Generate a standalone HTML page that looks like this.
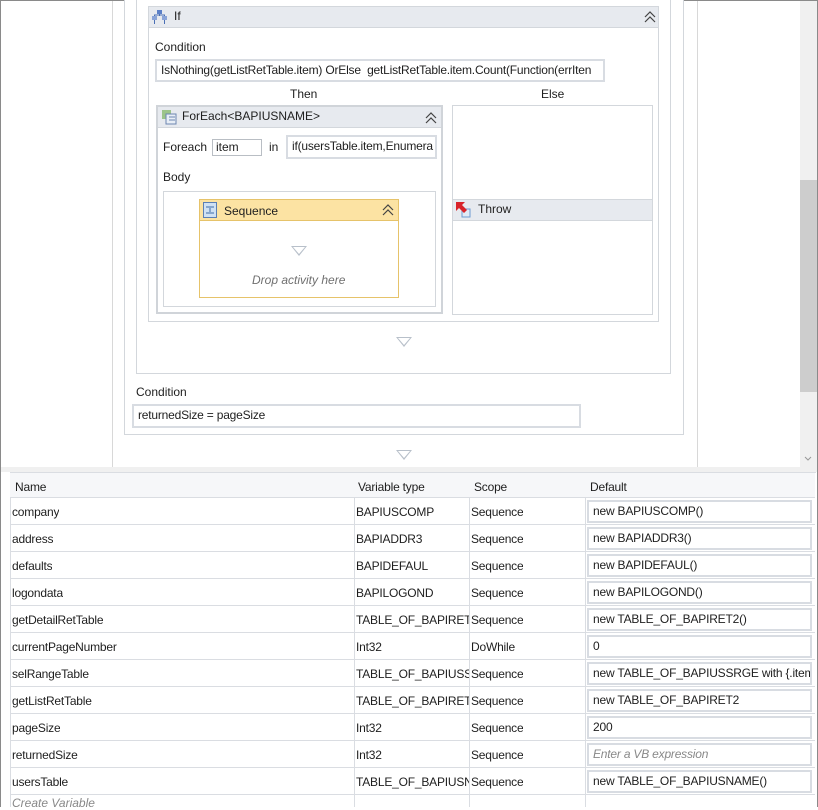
<!DOCTYPE html>
<html><head><meta charset="utf-8">
<style>
*{box-sizing:border-box;margin:0;padding:0}
body{width:818px;height:807px;position:relative;overflow:hidden;background:#fff;font-family:"Liberation Sans",sans-serif;font-size:12px;color:#1e1e1e}
.a{position:absolute}
.box{position:absolute;border:1px solid #d3d7dc;background:#fff}
.hdr{position:absolute;background:#e7eaef;border-bottom:1px solid #d3d7dc}
.inp{position:absolute;border:2px solid #d8dce2;background:#fff;padding-left:4px;line-height:18px;white-space:nowrap;overflow:hidden;letter-spacing:-0.2px}
.tri{position:absolute;width:0;height:0;border-left:8px solid transparent;border-right:8px solid transparent;border-top:10px solid #b8c0ca}
.tri:after{content:"";position:absolute;left:-6px;top:-9px;border-left:6px solid transparent;border-right:6px solid transparent;border-top:7.5px solid #fff}
.chev{position:absolute}
.row{position:absolute;left:10px;width:805px;height:27px;border-bottom:1px solid #dadde2}
.row span{position:absolute;top:7px;white-space:nowrap;overflow:hidden;letter-spacing:-0.2px}
.vl{position:absolute;top:0;width:1px;background:#dadde2}
</style></head><body>
<div class="a" style="left:0;top:0;width:818px;height:807px;border:1px solid #8a8a8a;border-bottom:none"></div>
<div class="a" style="left:112px;top:1px;width:1px;height:466px;background:#d8d8d8"></div>
<div class="a" style="left:697px;top:1px;width:1px;height:466px;background:#d8d8d8"></div>
<div class="box" style="left:124px;top:-2px;width:560px;height:437px"></div>
<div class="box" style="left:136px;top:-2px;width:535px;height:376px"></div>
<!-- If -->
<div class="box" style="left:148px;top:6px;width:511px;height:316px"></div>
<div class="hdr" style="left:149px;top:7px;width:509px;height:21px"></div>
<svg class="a" style="left:151px;top:9px" width="18" height="17" viewBox="0 0 18 17"><rect x="6" y="1" width="5" height="4" fill="#5b7fc7"/><rect x="1" y="7" width="5" height="4" fill="#8aa4d8"/><rect x="11" y="7" width="5" height="4" fill="#8aa4d8"/><path d="M8.5 5v2M3.5 7v-1h10v1M3.5 11v4M13.5 11v4" stroke="#4a6fb5" fill="none"/></svg>
<div class="a" style="left:174px;top:9px">If</div>
<svg class="chev" style="left:644px;top:11px" width="12" height="12"><path d="M1 6l5-5 5 5M1 11l5-5 5 5" stroke="#444" fill="none" stroke-width="1.2"/></svg>
<div class="a" style="left:155px;top:40px">Condition</div>
<div class="inp" style="left:155px;top:59px;width:450px;height:23px">IsNothing(getListRetTable.item) OrElse&nbsp; getListRetTable.item.Count(Function(errIten</div>
<div class="a" style="left:290px;top:87px">Then</div>
<div class="a" style="left:541px;top:87px">Else</div>
<!-- ForEach -->
<div class="box" style="left:156px;top:105px;width:287px;height:209px;border-color:#d0d4d9;border-width:2px"></div>
<div class="hdr" style="left:158px;top:107px;width:283px;height:21px"></div>
<svg class="a" style="left:160px;top:108px" width="18" height="18"><rect x="2" y="2" width="9" height="9" fill="#9cc48a"/><rect x="6" y="6" width="10" height="10" fill="#e8eef6" stroke="#6d86b0"/><path d="M9 9h6M9 12h6" stroke="#6d86b0"/></svg>
<div class="a" style="left:182px;top:109px">ForEach&lt;BAPIUSNAME&gt;</div>
<svg class="chev" style="left:425px;top:112px" width="12" height="12"><path d="M1 6l5-5 5 5M1 11l5-5 5 5" stroke="#444" fill="none" stroke-width="1.2"/></svg>
<div class="a" style="left:163px;top:140px">Foreach</div>
<div class="a" style="left:212px;top:139px;width:50px;height:17px;border:1px solid #b9bec4;padding-left:3px;line-height:15px">item</div>
<div class="a" style="left:269px;top:140px">in</div>
<div class="inp" style="left:286px;top:135px;width:151px;height:24px;line-height:19px">if(usersTable.item,Enumera</div>
<div class="a" style="left:163px;top:170px">Body</div>
<div class="box" style="left:163px;top:191px;width:273px;height:116px"></div>
<div class="a" style="left:199px;top:199px;width:200px;height:99px;border:1px solid #e6c36a;background:#fff"></div>
<div class="a" style="left:200px;top:200px;width:198px;height:21px;background:#fce3a3;border-bottom:1px solid #e6c36a"></div>
<svg class="a" style="left:203px;top:202px" width="14" height="16"><rect x="0.5" y="0.5" width="13" height="15" fill="#cfe1f4" stroke="#5a7fb5"/><path d="M3 5h8M3 11h8M7 6v4" stroke="#3d6aa8"/></svg>
<div class="a" style="left:224px;top:204px">Sequence</div>
<svg class="chev" style="left:382px;top:204px" width="12" height="12"><path d="M1 6l5-5 5 5M1 11l5-5 5 5" stroke="#444" fill="none" stroke-width="1.2"/></svg>
<div class="tri" style="left:291px;top:246px"></div>
<div class="a" style="left:252px;top:273px;font-style:italic;color:#707070">Drop activity here</div>
<!-- Else -->
<div class="box" style="left:452px;top:105px;width:201px;height:210px"></div>
<div class="a" style="left:453px;top:199px;width:199px;height:22px;background:#e7eaef;border-top:1px solid #d3d7dc;border-bottom:1px solid #d3d7dc"></div>
<svg class="a" style="left:455px;top:201px" width="18" height="18"><rect x="7" y="8" width="8" height="8" fill="#dfeaf6" stroke="#6d9bd0"/><path d="M1 1l9 0-3 3 5 5-3 3-5-5-3 3z" fill="#d8232a"/></svg>
<div class="a" style="left:478px;top:202px">Throw</div>
<div class="tri" style="left:396px;top:337px"></div>
<div class="a" style="left:136px;top:385px">Condition</div>
<div class="inp" style="left:132px;top:404px;width:449px;height:24px;line-height:19px">returnedSize = pageSize</div>
<div class="tri" style="left:396px;top:450px"></div>
<!-- scrollbar -->
<div class="a" style="left:800px;top:1px;width:17px;height:466px;background:#f0f0f0"></div>
<div class="a" style="left:800px;top:180px;width:17px;height:212px;background:#cdcdcd"></div>
<svg class="a" style="left:804px;top:456px" width="8" height="6"><path d="M1 1l3 3 3-3" stroke="#999" fill="none"/></svg>
<div class="a" style="left:1px;top:467px;width:816px;height:5px;background:#f0f0f0"></div>
<!-- table -->
<div class="a" style="left:10px;top:472px;width:806px;height:335px;border-left:1px solid #dadde2;border-top:1px solid #dadde2"></div>
<div class="vl" style="left:354px;top:473px;height:334px"></div>
<div class="vl" style="left:469px;top:473px;height:334px"></div>
<div class="vl" style="left:585px;top:473px;height:334px"></div>
<div class="row" style="top:472px;height:26px;border-top:1px solid #dadde2;background:#f6f7f9"><span style="left:5px;top:7px">Name</span><span style="left:348px">Variable type</span><span style="left:464px">Scope</span><span style="left:580px">Default</span></div>
<div class="row" style="top:498px"><span style="left:2px">company</span><span style="left:346px">BAPIUSCOMP</span><span style="left:461px">Sequence</span></div>
<div class="row" style="top:525px"><span style="left:2px">address</span><span style="left:346px">BAPIADDR3</span><span style="left:461px">Sequence</span></div>
<div class="row" style="top:552px"><span style="left:2px">defaults</span><span style="left:346px">BAPIDEFAUL</span><span style="left:461px">Sequence</span></div>
<div class="row" style="top:579px"><span style="left:2px">logondata</span><span style="left:346px">BAPILOGOND</span><span style="left:461px">Sequence</span></div>
<div class="row" style="top:606px"><span style="left:2px">getDetailRetTable</span><span style="left:346px;width:113px">TABLE_OF_BAPIRET2</span><span style="left:461px">Sequence</span></div>
<div class="row" style="top:633px"><span style="left:2px">currentPageNumber</span><span style="left:346px">Int32</span><span style="left:461px">DoWhile</span></div>
<div class="row" style="top:660px"><span style="left:2px">selRangeTable</span><span style="left:346px;width:113px">TABLE_OF_BAPIUSSRGE</span><span style="left:461px">Sequence</span></div>
<div class="row" style="top:687px"><span style="left:2px">getListRetTable</span><span style="left:346px;width:113px">TABLE_OF_BAPIRET2</span><span style="left:461px">Sequence</span></div>
<div class="row" style="top:714px"><span style="left:2px">pageSize</span><span style="left:346px">Int32</span><span style="left:461px">Sequence</span></div>
<div class="row" style="top:741px"><span style="left:2px">returnedSize</span><span style="left:346px">Int32</span><span style="left:461px">Sequence</span></div>
<div class="row" style="top:768px"><span style="left:2px">usersTable</span><span style="left:346px;width:113px">TABLE_OF_BAPIUSNAME</span><span style="left:461px">Sequence</span></div>
<div class="a" style="left:12px;top:796px;font-style:italic;color:#888">Create Variable</div>
<div class="inp" style="left:587px;top:500px;width:225px;height:23px">new BAPIUSCOMP()</div>
<div class="inp" style="left:587px;top:527px;width:225px;height:23px">new BAPIADDR3()</div>
<div class="inp" style="left:587px;top:554px;width:225px;height:23px">new BAPIDEFAUL()</div>
<div class="inp" style="left:587px;top:581px;width:225px;height:23px">new BAPILOGOND()</div>
<div class="inp" style="left:587px;top:608px;width:225px;height:23px">new TABLE_OF_BAPIRET2()</div>
<div class="inp" style="left:587px;top:635px;width:225px;height:23px">0</div>
<div class="inp" style="left:587px;top:662px;width:225px;height:23px">new TABLE_OF_BAPIUSSRGE with {.item =</div>
<div class="inp" style="left:587px;top:689px;width:225px;height:23px">new TABLE_OF_BAPIRET2</div>
<div class="inp" style="left:587px;top:716px;width:225px;height:23px">200</div>
<div class="inp" style="left:587px;top:743px;width:225px;height:23px;font-style:italic;color:#888">Enter a VB expression</div>
<div class="inp" style="left:587px;top:770px;width:225px;height:23px">new TABLE_OF_BAPIUSNAME()</div>
</body></html>
